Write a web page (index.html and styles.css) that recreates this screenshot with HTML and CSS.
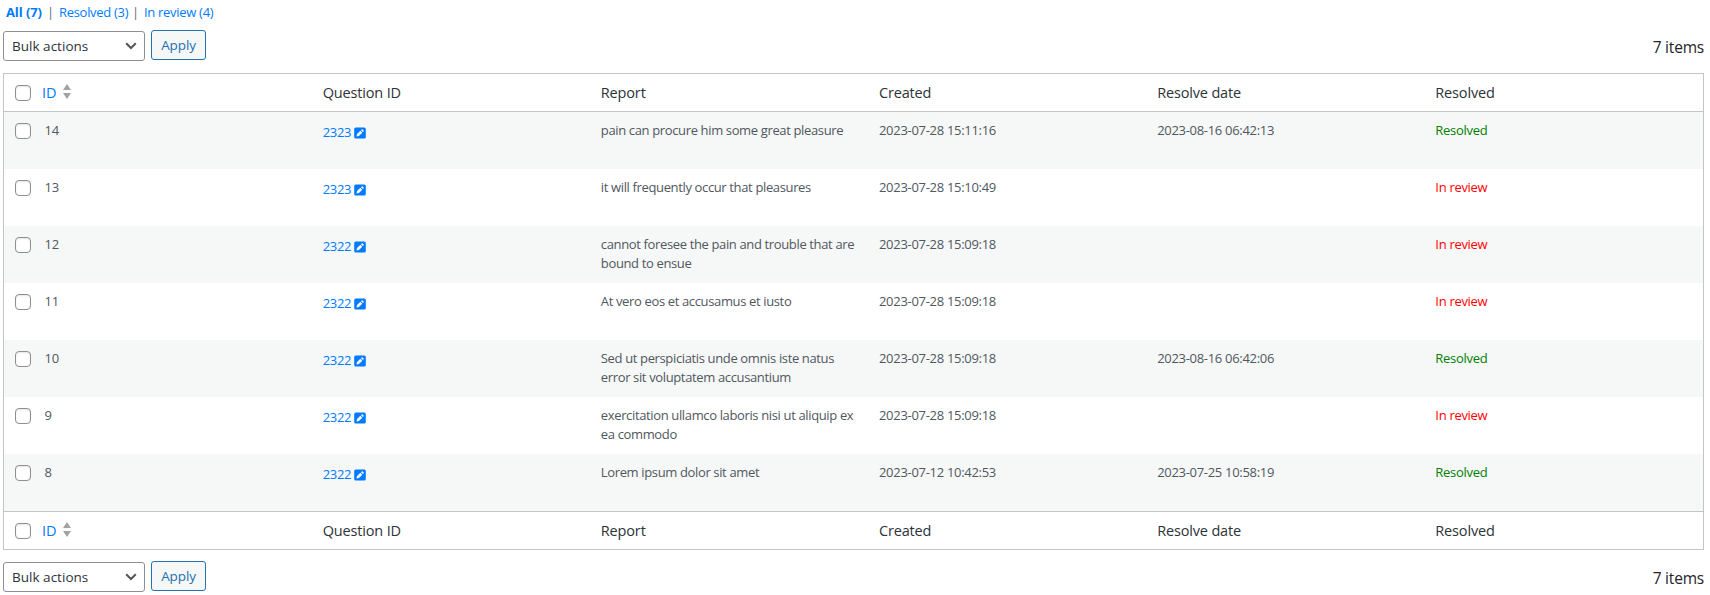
FILE: index.html
```
<!DOCTYPE html>
<html lang="en">
<head>
<meta charset="utf-8">
<title>Reports</title>
<link rel="stylesheet" href="styles.css">
</head>
<body>
<svg class="defs" width="0" height="0" aria-hidden="true">
  <symbol id="edit" viewBox="0 0 12 12">
    <rect x="0.2" y="0.5" width="11.6" height="11" rx="1.6" fill="#007bff"/>
    <path d="M2.5 9.5 3 7.1 6.4 3.8 8.3 5.7 4.9 9.1Z" fill="#fff"/>
    <path d="M7 3.2 7.7 2.5Q8.2 2.1 8.7 2.5L9.5 3.3Q9.9 3.8 9.5 4.4L8.9 5.1Z" fill="#fff"/>
  </symbol>
  <symbol id="sort" viewBox="0 0 8 15">
    <path d="M4 0 8 6H0ZM0 9H8L4 15Z" fill="#a0a2a4"/>
  </symbol>
  <symbol id="chevron" viewBox="0 0 12 8">
    <path d="M1.2 1.3 6 6 10.8 1.3" fill="none" stroke="#555" stroke-width="2"/>
  </symbol>
</svg>
<main class="page">
  <nav class="views"><a class="current" href="#">All (7)</a><i>|</i><a class="v-res" href="#">Resolved (3)</a><i>|</i><a class="v-rev" href="#">In review (4)</a></nav>
  <div class="tablenav">
    <div class="select"><span>Bulk actions</span><svg class="chevron"><use href="#chevron"/></svg></div>
    <button class="apply">Apply</button>
    <span class="count">7 items</span>
  </div>
  <section class="table">
    <div class="row head"><span class="check"></span><a class="sortable" href="#">ID<svg class="sort"><use href="#sort"/></svg></a><span>Question ID</span><span>Report</span><span>Created</span><span>Resolve date</span><span>Resolved</span></div>
    <div class="row item"><span class="check"></span><span class="id">14</span><a href="#">2323<svg class="edit"><use href="#edit"/></svg></a><span class="report">pain can procure him some great pleasure</span><span class="date">2023-07-28 15:11:16</span><span class="date">2023-08-16 06:42:13</span><span class="resolved">Resolved</span></div>
    <div class="row item"><span class="check"></span><span class="id">13</span><a href="#">2323<svg class="edit"><use href="#edit"/></svg></a><span class="report">it will frequently occur that pleasures</span><span class="date">2023-07-28 15:10:49</span><span></span><span class="review">In review</span></div>
    <div class="row item"><span class="check"></span><span class="id">12</span><a href="#">2322<svg class="edit"><use href="#edit"/></svg></a><span class="report">cannot foresee the pain and trouble that are<br>bound to ensue</span><span class="date">2023-07-28 15:09:18</span><span></span><span class="review">In review</span></div>
    <div class="row item"><span class="check"></span><span class="id">11</span><a href="#">2322<svg class="edit"><use href="#edit"/></svg></a><span class="report">At vero eos et accusamus et iusto</span><span class="date">2023-07-28 15:09:18</span><span></span><span class="review">In review</span></div>
    <div class="row item"><span class="check"></span><span class="id">10</span><a href="#">2322<svg class="edit"><use href="#edit"/></svg></a><span class="report">Sed ut perspiciatis unde omnis iste natus<br>error sit voluptatem accusantium</span><span class="date">2023-07-28 15:09:18</span><span class="date">2023-08-16 06:42:06</span><span class="resolved">Resolved</span></div>
    <div class="row item"><span class="check"></span><span class="id">9</span><a href="#">2322<svg class="edit"><use href="#edit"/></svg></a><span class="report">exercitation ullamco laboris nisi ut aliquip ex<br>ea commodo</span><span class="date">2023-07-28 15:09:18</span><span></span><span class="review">In review</span></div>
    <div class="row item"><span class="check"></span><span class="id">8</span><a href="#">2322<svg class="edit"><use href="#edit"/></svg></a><span class="report">Lorem ipsum dolor sit amet</span><span class="date">2023-07-12 10:42:53</span><span class="date">2023-07-25 10:58:19</span><span class="resolved">Resolved</span></div>
    <div class="row head foot"><span class="check"></span><a class="sortable" href="#">ID<svg class="sort"><use href="#sort"/></svg></a><span>Question ID</span><span>Report</span><span>Created</span><span>Resolve date</span><span>Resolved</span></div>
  </section>
  <div class="tablenav bottom">
    <div class="select"><span>Bulk actions</span><svg class="chevron"><use href="#chevron"/></svg></div>
    <button class="apply">Apply</button>
    <span class="count">7 items</span>
  </div>
</main>
</body>
</html>
```
FILE: styles.css
```
* { box-sizing: border-box; }
body { margin: 0; background: #fff; color: #50575e; font: 13px/19px "Open Sans", "Noto Sans", sans-serif; }
a { color: #007bff; text-decoration: none; }
.defs { display: block; }
.page { width: 1704px; padding: 3px 0 0 3px; }
.views { display: flex; height: 20px; padding-left: 3px; letter-spacing: -0.3px; }
.views a { white-space: nowrap; }
.views i { width: 17px; font-style: normal; text-align: center; color: #646970; }
.views .current { width: 36px; font-weight: 700; letter-spacing: -0.1px; }
.views .v-res { width: 68px; }
.tablenav { display: flex; height: 50px; padding-top: 7px; align-items: flex-start; }
.select { display: flex; width: 142px; height: 30px; margin-top: 1px; padding: 0 7px 0 8px; align-items: center; justify-content: space-between; border: 1px solid #8c8f94; border-radius: 3px; color: #2c3338; font-size: 13.5px; letter-spacing: -0.2px; }
.select { letter-spacing: -0.2px; }
.tablenav .select span { letter-spacing: 0.02px; margin-left: -1px; padding-left: 1px; }
.chevron { width: 12px; height: 8px; }
.apply { width: 55px; height: 30px; margin: 0 0 0 6px; padding: 0; border: 1px solid #2271b1; border-radius: 3px; background: #f6f7f7; color: #2271b1; font: 13.5px/26px "Open Sans", sans-serif; letter-spacing: -0.1px; }
.count { margin: 6px 0 0 auto; color: #212529; font-size: 15.5px; line-height: 22px; letter-spacing: -0.2px; }
.table { width: 1701px; border: 1px solid #c3c4c7; }
.row { display: grid; grid-template-columns: 30px repeat(6, 1fr); }
.head { height: 38px; border-bottom: 1px solid #c3c4c7; padding-top: 8px; color: #2c3338; font-size: 14.5px; line-height: 22px; letter-spacing: -0.16px; }
.head > *, .item > * { padding-left: 10.5px; }
.foot { border-top: 1px solid #c3c4c7; border-bottom: 0; }
.head .sortable { display: flex; padding-left: 8px; }
.sort { width: 8px; height: 15px; margin: 2px 0 0 7px; }
.item { height: 57px; padding-top: 9px; letter-spacing: -0.3px; }
.item:nth-child(even) { background: #f6f7f7; }
.row .check { width: 16px; height: 16px; margin: 3px 0 0 11px; padding: 0; border: 1px solid #8c8f94; border-radius: 4px; background: #fff; box-shadow: inset 0 1px 2px rgba(0, 0, 0, .1); }
.item .check { margin-top: 2px; }
.item a { padding-top: 2px; }
.edit { width: 12px; height: 12px; margin-left: 3px; vertical-align: -2px; }
.report { white-space: nowrap; letter-spacing: -0.36px; }
.resolved { color: #008000; }
.review { color: #f00; }
.bottom { height: 45px; padding-top: 11px; }
```
